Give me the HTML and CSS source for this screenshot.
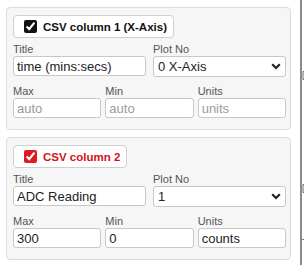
FILE: index.html
```html
<!DOCTYPE html>
<html lang="en">
<head>
    <meta charset="UTF-8">
    <meta name="viewport" content="width=device-width, initial-scale=1.0">
    <title>CSV Columns</title>
    <link rel="stylesheet" href="styles.css">
</head>
<body>
    <div class="page">
        <div class="columns">
            <div class="card">
                <label class="col-head">
                    <input type="checkbox" class="col-check" checked>
                    <span>CSV column 1 (X-Axis)</span>
                </label>
                <div class="row two">
                    <div class="field">
                        <label>Title</label>
                        <input type="text" value="time (mins:secs)">
                    </div>
                    <div class="field">
                        <label>Plot No</label>
                        <div class="select-wrap">
                            <select>
                                <option selected>0 X-Axis</option>
                                <option>1</option>
                                <option>2</option>
                            </select>
                            <svg class="chevron" width="10" height="7" viewBox="0 0 10 7"><path d="M1.2 1.3 L5 5 L8.8 1.3" fill="none" stroke="#222" stroke-width="2.2"/></svg>
                        </div>
                    </div>
                </div>
                <div class="row three">
                    <div class="field">
                        <label>Max</label>
                        <input type="text" placeholder="auto">
                    </div>
                    <div class="field">
                        <label>Min</label>
                        <input type="text" placeholder="auto">
                    </div>
                    <div class="field">
                        <label>Units</label>
                        <input type="text" placeholder="units">
                    </div>
                </div>
            </div>

            <div class="card">
                <label class="col-head red">
                    <input type="checkbox" class="col-check" checked>
                    <span>CSV column 2</span>
                </label>
                <div class="row two">
                    <div class="field">
                        <label>Title</label>
                        <input type="text" value="ADC Reading">
                    </div>
                    <div class="field">
                        <label>Plot No</label>
                        <div class="select-wrap">
                            <select>
                                <option>0 X-Axis</option>
                                <option selected>1</option>
                                <option>2</option>
                            </select>
                            <svg class="chevron" width="10" height="7" viewBox="0 0 10 7"><path d="M1.2 1.3 L5 5 L8.8 1.3" fill="none" stroke="#222" stroke-width="2.2"/></svg>
                        </div>
                    </div>
                </div>
                <div class="row three">
                    <div class="field">
                        <label>Max</label>
                        <input type="text" value="300">
                    </div>
                    <div class="field">
                        <label>Min</label>
                        <input type="text" value="0">
                    </div>
                    <div class="field">
                        <label>Units</label>
                        <input type="text" value="counts">
                    </div>
                </div>
            </div>
        </div>
        <div class="side">
            <svg class="side-mark mark-1" width="3" height="9" viewBox="0 0 3 9"><path d="M3 0.5 H1 V8.5 H3" fill="none" stroke="#5a6b80" stroke-width="1"/></svg>
            <svg class="side-mark mark-2" width="3" height="9" viewBox="0 0 3 9"><path d="M3 0.5 H1 V8.5 H3" fill="none" stroke="#5a6b80" stroke-width="1"/></svg>
            <span class="side-rule"></span>
        </div>
    </div>
</body>
</html>
```

FILE: styles.css
```css
* {
    margin: 0;
    padding: 0;
    box-sizing: border-box;
    font-family: "Liberation Sans", Arial, sans-serif;
}

body {
    background-color: #fff;
    color: #222;
    width: 304px;
    height: 265px;
    overflow: hidden;
}

.page {
    display: flex;
    height: 265px;
}

.columns {
    width: 300px;
    padding: 7px 0 0 6px;
    display: flex;
    flex-direction: column;
    gap: 7px;
}

.card {
    width: 285px;
    height: 123px;
    background-color: #f6f6f6;
    border: 1px solid #dcdcdc;
    border-radius: 4px;
    padding: 7px 4px 0 6px;
}

.col-head {
    display: inline-flex;
    align-items: center;
    gap: 6px;
    height: 23px;
    padding: 0 6px 0 10px;
    background-color: #fff;
    border: 1px solid #cfcfcf;
    border-radius: 4px;
    font-size: 11.5px;
    font-weight: bold;
    color: #111;
    margin-bottom: 4px;
}

.col-check {
    width: 13px;
    height: 13px;
    margin: 0;
    accent-color: #111;
}

.col-head.red {
    color: #d4111b;
}

.col-head.red .col-check {
    accent-color: #dc1c20;
}

.row {
    display: grid;
}

.row.two {
    grid-template-columns: 1fr 1fr;
    gap: 7px;
}

.row.three {
    grid-template-columns: 1fr 1fr 1fr;
    gap: 4px;
    margin-top: 7px;
}

.field label {
    display: block;
    font-size: 11px;
    line-height: 14px;
    color: #555;
}

.field input,
.field select {
    display: block;
    width: 100%;
    height: 20px;
    border: 1px solid #c8c8c8;
    border-radius: 3px;
    background-color: #fff;
    padding: 0 3px;
    font-size: 13px;
    color: #222;
    outline: none;
}

.field input::placeholder {
    color: #9a9a9a;
}

.select-wrap {
    position: relative;
}

.field select {
    height: 21px;
    appearance: none;
    -webkit-appearance: none;
    padding: 0 4px;
}

.chevron {
    position: absolute;
    right: 5px;
    top: 7px;
    pointer-events: none;
}

.side {
    position: relative;
    width: 4px;
    border-left: 2px solid #8a8a8a;
    overflow: hidden;
}

.side-mark {
    position: absolute;
    left: 0;
}

.mark-1 {
    top: 71px;
}

.mark-2 {
    top: 184px;
}

.side-rule {
    position: absolute;
    left: 0;
    top: 239px;
    width: 4px;
    height: 1px;
    background-color: #777;
}
```
